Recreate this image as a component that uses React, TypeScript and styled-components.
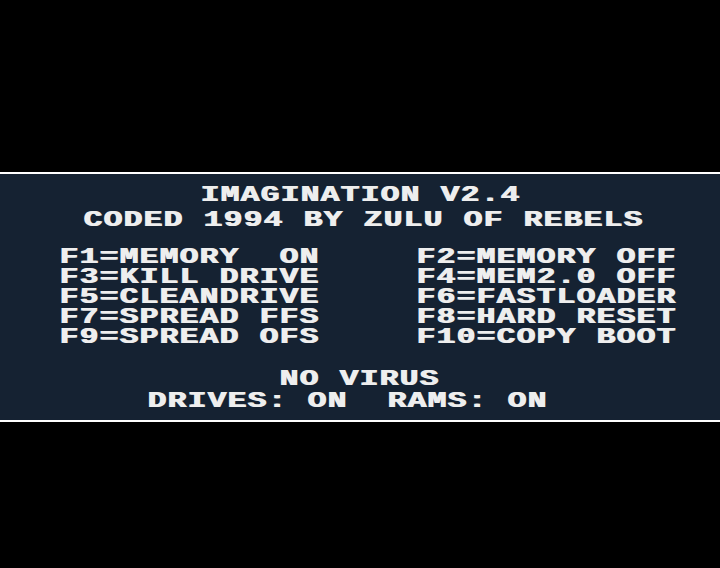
import React from "react";
import styled, { createGlobalStyle } from "styled-components";

const Global = createGlobalStyle`
  html, body {
    margin: 0;
    padding: 0;
    background: #000;
    width: 720px;
    height: 568px;
    overflow: hidden;
  }
`;

const Screen = styled.main`
  width: 720px;
  height: 568px;
  background: #000;
  padding-top: 172px;
  box-sizing: border-box;
`;

const Panel = styled.section`
  box-sizing: border-box;
  height: 250px;
  padding-top: 11px;
  background: #152232;
  border-top: 2px solid #ffffff;
  border-bottom: 2px solid #ffffff;
`;

const Row = styled.div<{ $indent: number; $gap?: number }>`
  display: flex;
  height: 20px;
  padding-left: ${(p) => p.$indent}px;
  margin-top: ${(p) => p.$gap ?? 0}px;
`;

const MenuGrid = styled.div`
  display: grid;
  grid-template-columns: 357px max-content;
  grid-auto-rows: 20px;
  padding-left: 59px;
  margin-top: 17px;
`;

const Entry = styled.div`
  display: flex;
  height: 20px;
`;

const Line = styled.span`
  display: inline-block;
  height: 20px;
  line-height: 20px;
  font-family: "Liberation Mono", "DejaVu Sans Mono", monospace;
  font-weight: bold;
  font-size: 21.5px;
  letter-spacing: 0.89px;
  color: #eeeeee;
  white-space: pre;
  transform: scaleX(1.45);
  transform-origin: left center;
  text-shadow: 1px 0 0 #eeeeee;
`;

const menu: [string, string][] = [
  ["F1=MEMORY  ON", "F2=MEMORY OFF"],
  ["F3=KILL DRIVE", "F4=MEM2.0 OFF"],
  ["F5=CLEANDRIVE", "F6=FASTLOADER"],
  ["F7=SPREAD FFS", "F8=HARD RESET"],
  ["F9=SPREAD OFS", "F10=COPY BOOT"],
];

export default function App() {
  return (
    <>
      <Global />
      <Screen>
        <Panel>
          <Row $indent={200}>
            <Line>IMAGINATION V2.4</Line>
          </Row>
          <Row $indent={83} $gap={5}>
            <Line>CODED 1994 BY ZULU OF REBELS</Line>
          </Row>
          <MenuGrid>
            {menu.map(([l, r]) => (
              <React.Fragment key={l}>
                <Entry>
                  <Line>{l}</Line>
                </Entry>
                <Entry>
                  <Line>{r}</Line>
                </Entry>
              </React.Fragment>
            ))}
          </MenuGrid>
          <Row $indent={279} $gap={22}>
            <Line>NO VIRUS</Line>
          </Row>
          <Row $indent={147} $gap={2}>
            <Line>DRIVES: ON  RAMS: ON</Line>
          </Row>
        </Panel>
      </Screen>
    </>
  );
}
